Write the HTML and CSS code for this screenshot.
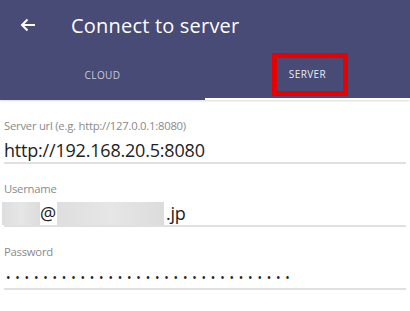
FILE: index.html
```html
<!DOCTYPE html>
<html>
<head>
<meta charset="utf-8">
<link rel="stylesheet" href="styles.css">
</head>
<body>
<header class="appbar">
  <div class="toolbar">
    <svg class="back" width="16" height="14" viewBox="0 0 16 14"><path d="M15 7H2M7.5 1.5L2 7l5.5 5.5" fill="none" stroke="#fff" stroke-width="2"/></svg>
    <h1 class="title">Connect to server</h1>
  </div>
  <div class="tabs">
    <div class="tab">CLOUD</div>
    <div class="tab active">SERVER<span class="highlight"></span></div>
  </div>
</header>
<main class="form">
  <div class="field">
    <div class="label">Server url (e.g. http://127.0.0.1:8080)</div>
    <div class="value">http://192.168.20.5:8080</div>
  </div>
  <div class="field">
    <div class="label">Username</div>
    <div class="value user"><span class="blur b1"></span>@<span class="blur b2"></span>.jp</div>
  </div>
  <div class="field">
    <div class="label">Password</div>
    <div class="value pass">•••••••••••••••••••••••••••••••</div>
  </div>
</main>
</body>
</html>
```
FILE: styles.css
```css
html, body { margin: 0; padding: 0; background: #fff; }
body { width: 410px; height: 311px; overflow: hidden; font-family: "Open Sans", "DejaVu Sans", sans-serif; }
.appbar { background: #474b75; color: #fff; box-shadow: 0 1px 2px rgba(0,0,0,0.15); }
.toolbar { height: 50px; display: flex; align-items: center; }
.back { margin-left: 20px; margin-right: 35px; }
.title { margin: 0; font-weight: 400; font-size: 20px; letter-spacing: 0.2px; color: #fff; }
.tabs { display: flex; height: 50px; }
.tab { flex: 1; display: flex; align-items: center; justify-content: center; font-size: 10px; color: #c9cad8; position: relative; letter-spacing: 0.4px; }
.tab.active { color: #e8e8f0; border-bottom: 2px solid #fff; }
.highlight { position: absolute; left: 67px; top: 3px; width: 66px; height: 33px; border: 5px solid #e60000; }
.form { padding: 1px 4px 0; }
.field { padding-top: 17px; border-bottom: 2px solid #e0e0e0; }
.label { font-size: 11.3px; line-height: 16px; letter-spacing: -0.25px; color: #8a8a8a; }
.value { margin-top: 5px; font-size: 18px; line-height: 23px; letter-spacing: -0.2px; color: #222; }
.user { display: flex; align-items: center; }
.blur { display: inline-block; height: 23px; background: linear-gradient(90deg, #dedede, #e6e6e6 50%, #dcdcdc); }
.b1 { width: 38px; margin-left: -2px; }
.b2 { width: 107px; margin-left: 1px; margin-right: 2px; }
.pass { font-size: 12px; letter-spacing: 4.8px; padding-left: 2px; padding-top: 2px; line-height: 21px; }
```
